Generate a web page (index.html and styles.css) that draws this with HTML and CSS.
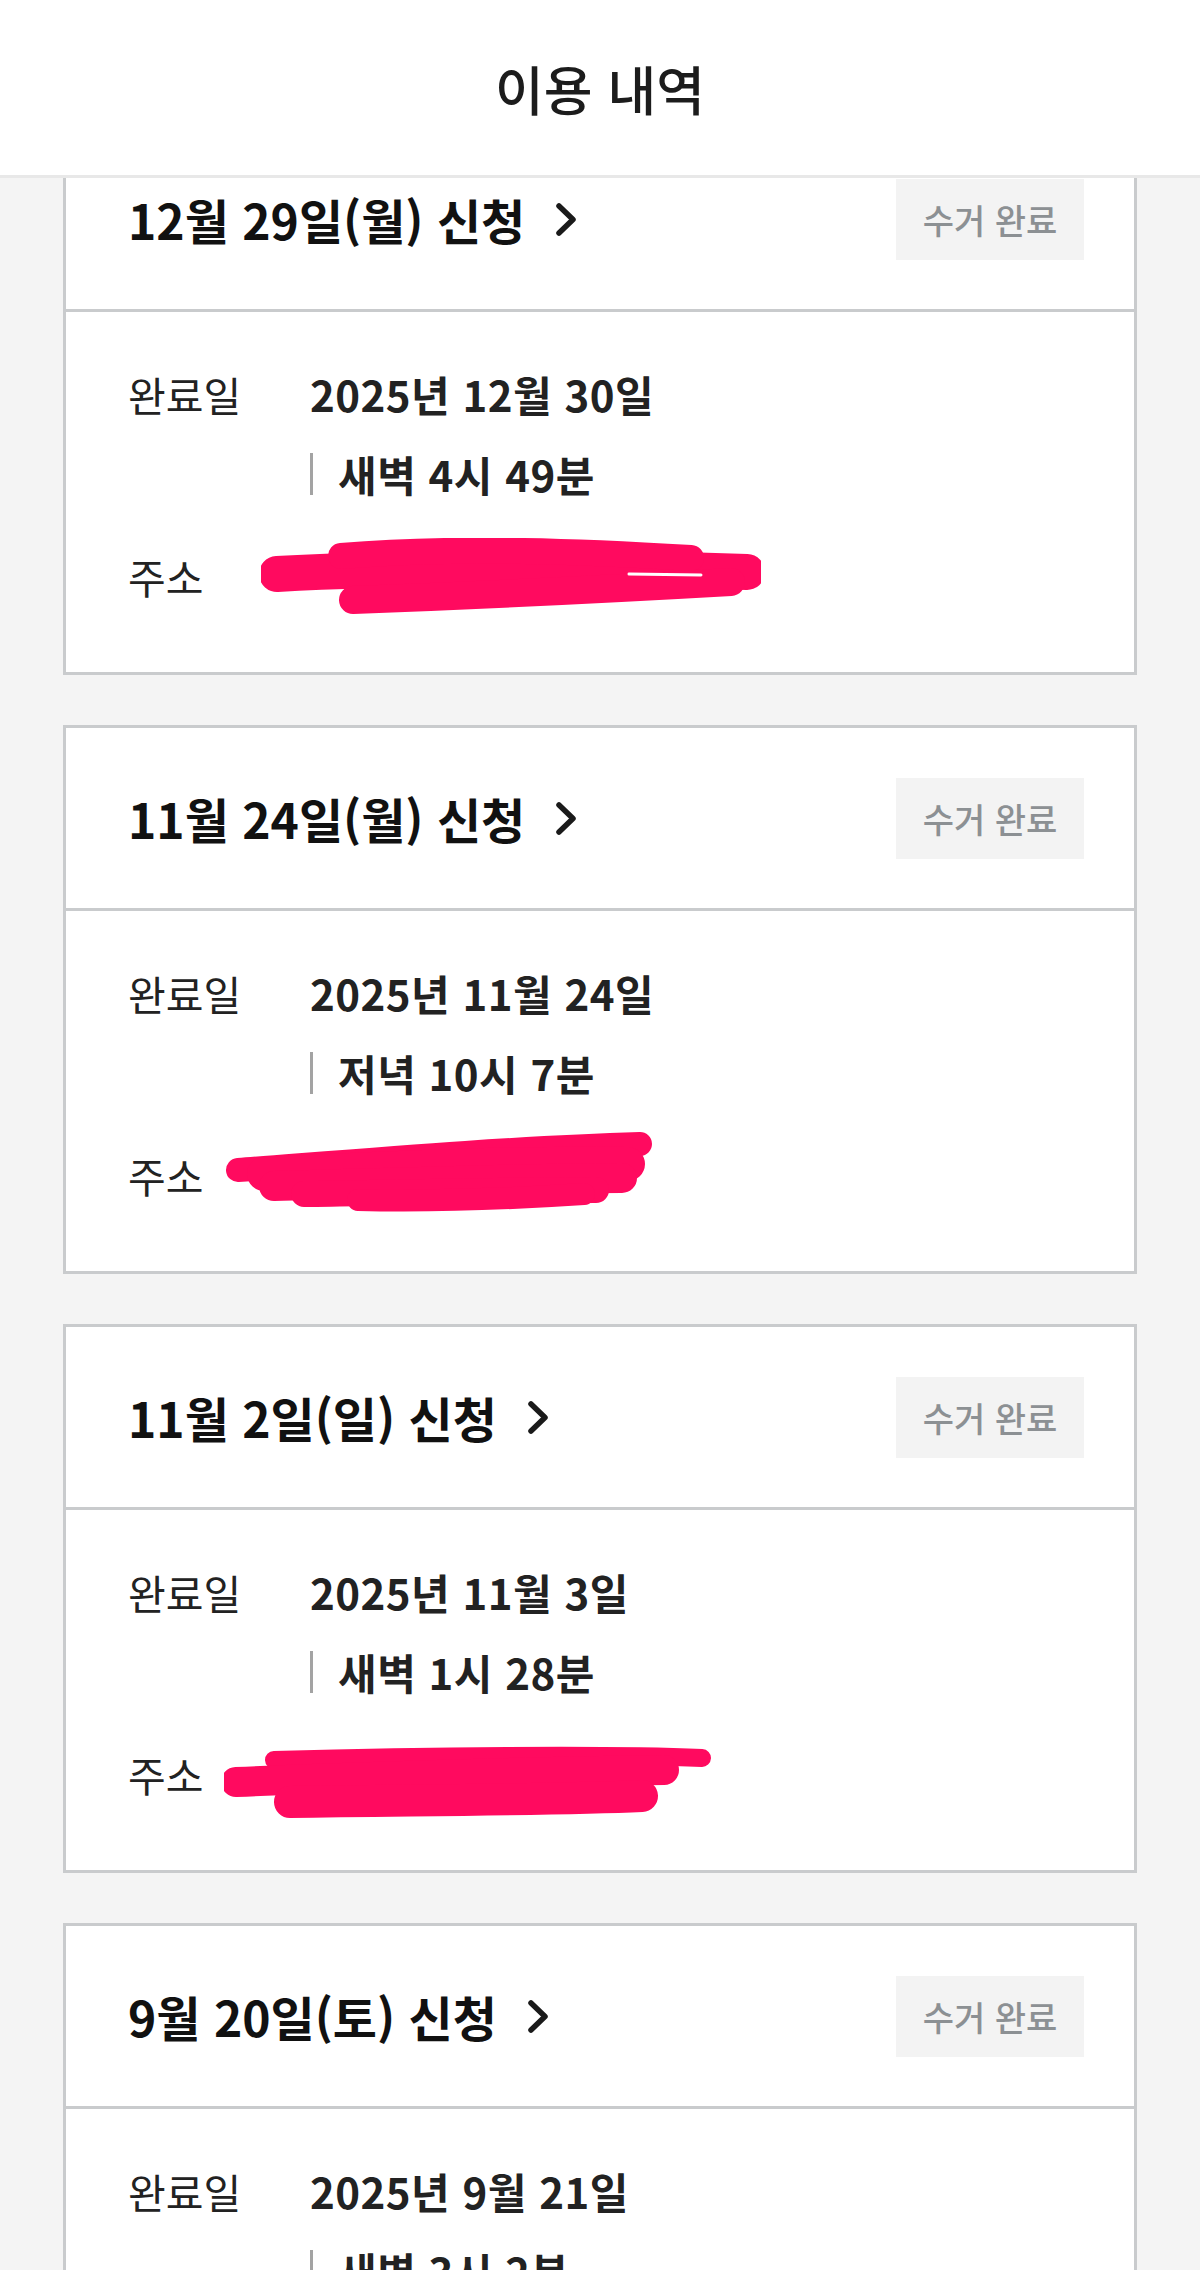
FILE: index.html
```html
<!DOCTYPE html>
<html lang="ko">
<head>
    <meta charset="UTF-8">
    <meta name="viewport" content="width=device-width, initial-scale=1.0">
    <title>이용 내역</title>
    <link rel="stylesheet" href="styles.css">
</head>
<body>

<header class="top-bar">
    <h1>이용 내역</h1>
</header>

<main class="history-list">

    <section class="card">
        <div class="card-head">
            <a class="card-title" href="#">12월 29일(월) 신청
                <svg class="chevron" viewBox="0 0 22 35"><polyline points="4,4 18,17.5 4,31"/></svg>
            </a>
            <span class="badge">수거 완료</span>
        </div>
        <div class="card-body">
            <div class="row">
                <span class="label">완료일</span>
                <div class="value">
                    <div>2025년 12월 30일</div>
                    <div class="time">새벽 4시 49분</div>
                </div>
            </div>
            <div class="row addr">
                <span class="label">주소</span>
                <div class="value"></div>
                <!-- 주소 가림 -->
                <svg class="scribble s1" viewBox="0 0 500 82">
                    <path d="M16 36 C 120 30, 300 28, 486 34" stroke-width="36"/>
                    <path d="M80 18 C 200 8, 330 14, 430 20" stroke-width="26"/>
                    <path d="M92 62 C 200 58, 330 52, 470 44" stroke-width="28"/>
                    <path class="gap" d="M368 36 L 440 37" stroke-width="3"/>
                </svg>
            </div>
        </div>
    </section>

    <section class="card">
        <div class="card-head">
            <a class="card-title" href="#">11월 24일(월) 신청
                <svg class="chevron" viewBox="0 0 22 35"><polyline points="4,4 18,17.5 4,31"/></svg>
            </a>
            <span class="badge">수거 완료</span>
        </div>
        <div class="card-body">
            <div class="row">
                <span class="label">완료일</span>
                <div class="value">
                    <div>2025년 11월 24일</div>
                    <div class="time">저녁 10시 7분</div>
                </div>
            </div>
            <div class="row addr">
                <span class="label">주소</span>
                <div class="value"></div>
                <svg class="scribble s2" viewBox="0 0 430 90">
                    <path d="M14 40 C 120 32, 280 18, 416 14" stroke-width="24"/>
                    <path d="M40 44 C 160 38, 300 32, 404 34" stroke-width="34"/>
                    <path d="M50 56 C 200 52, 320 48, 398 48" stroke-width="30"/>
                    <path d="M80 64 C 200 62, 300 60, 372 60" stroke-width="26"/>
                    <path d="M134 70 C 220 72, 300 68, 360 64" stroke-width="22"/>
                </svg>
            </div>
        </div>
    </section>

    <section class="card">
        <div class="card-head">
            <a class="card-title" href="#">11월 2일(일) 신청
                <svg class="chevron" viewBox="0 0 22 35"><polyline points="4,4 18,17.5 4,31"/></svg>
            </a>
            <span class="badge">수거 완료</span>
        </div>
        <div class="card-body">
            <div class="row">
                <span class="label">완료일</span>
                <div class="value">
                    <div>2025년 11월 3일</div>
                    <div class="time">새벽 1시 28분</div>
                </div>
            </div>
            <div class="row addr">
                <span class="label">주소</span>
                <div class="value"></div>
                <svg class="scribble s3" viewBox="0 0 490 85">
                    <path d="M50 20 C 200 16, 380 14, 478 18" stroke-width="18"/>
                    <path d="M12 42 C 150 36, 300 32, 440 30" stroke-width="30"/>
                    <path d="M66 62 C 200 60, 330 60, 418 56" stroke-width="32"/>
                </svg>
            </div>
        </div>
    </section>

    <section class="card">
        <div class="card-head">
            <a class="card-title" href="#">9월 20일(토) 신청
                <svg class="chevron" viewBox="0 0 22 35"><polyline points="4,4 18,17.5 4,31"/></svg>
            </a>
            <span class="badge">수거 완료</span>
        </div>
        <div class="card-body">
            <div class="row">
                <span class="label">완료일</span>
                <div class="value">
                    <div>2025년 9월 21일</div>
                    <div class="time">새벽 3시 2분</div>
                </div>
            </div>
            <div class="row addr">
                <span class="label">주소</span>
                <div class="value"></div>
            </div>
        </div>
    </section>

</main>

</body>
</html>
```

FILE: styles.css
```css
* {
    box-sizing: border-box;
}

body {
    margin: 0;
    font-family: "Noto Sans CJK KR", "Noto Sans", sans-serif;
    background-color: #f4f4f4;
    color: #222;
}

.top-bar {
    position: fixed;
    top: 0;
    left: 0;
    right: 0;
    height: 178px;
    background: white;
    border-bottom: 3px solid #e8e8e8;
    display: flex;
    justify-content: center;
    align-items: center;
    z-index: 10;
}

.top-bar h1 {
    margin: 0;
    font-size: 53px;
    font-weight: 500;
    color: #1c1c1c;
}

.history-list {
    padding: 126px 63px 0;
    display: flex;
    flex-direction: column;
    gap: 50px;
}

.card {
    background: white;
    border: 3px solid #c9cbcd;
}

.card-head {
    height: 183px;
    padding: 0 50px 0 62px;
    border-bottom: 3px solid #c9cbcd;
    display: flex;
    align-items: center;
    justify-content: space-between;
}

.card-title {
    display: flex;
    align-items: center;
    gap: 30px;
    font-size: 48px;
    font-weight: 700;
    color: #111;
    text-decoration: none;
}

.chevron {
    width: 22px;
    height: 35px;
    fill: none;
    stroke: #1a1a1a;
    stroke-width: 5.5;
    stroke-linecap: round;
    stroke-linejoin: round;
}

.badge {
    width: 188px;
    height: 81px;
    background: #f3f3f3;
    color: #8c9093;
    font-size: 34px;
    font-weight: 500;
    display: flex;
    align-items: center;
    justify-content: center;
}

.card-body {
    padding: 54px 62px 68px;
}

.row {
    display: grid;
    grid-template-columns: 182px 1fr;
    font-size: 41px;
    line-height: 56px;
}

.label {
    font-weight: 400;
    color: #222;
}

.value {
    font-size: 42px;
    font-weight: 700;
    letter-spacing: 0.5px;
    color: #222;
    display: flex;
    flex-direction: column;
    gap: 24px;
}

.time {
    display: flex;
    align-items: center;
}

.time::before {
    content: "";
    width: 3px;
    height: 42px;
    background: #a3a3a3;
    margin-right: 25px;
}

.addr {
    position: relative;
    margin-top: 46px;
    height: 56px;
}

.scribble {
    position: absolute;
    fill: none;
    stroke: #ff0a5f;
    stroke-linecap: round;
    stroke-linejoin: round;
}

.scribble .gap {
    stroke: white;
}

.s1 {
    left: 133px;
    top: -10px;
    width: 500px;
    height: 82px;
}

.s2 {
    left: 96px;
    top: -17px;
    width: 430px;
    height: 90px;
}

.s3 {
    left: 96px;
    top: -6px;
    width: 490px;
    height: 85px;
}
```
